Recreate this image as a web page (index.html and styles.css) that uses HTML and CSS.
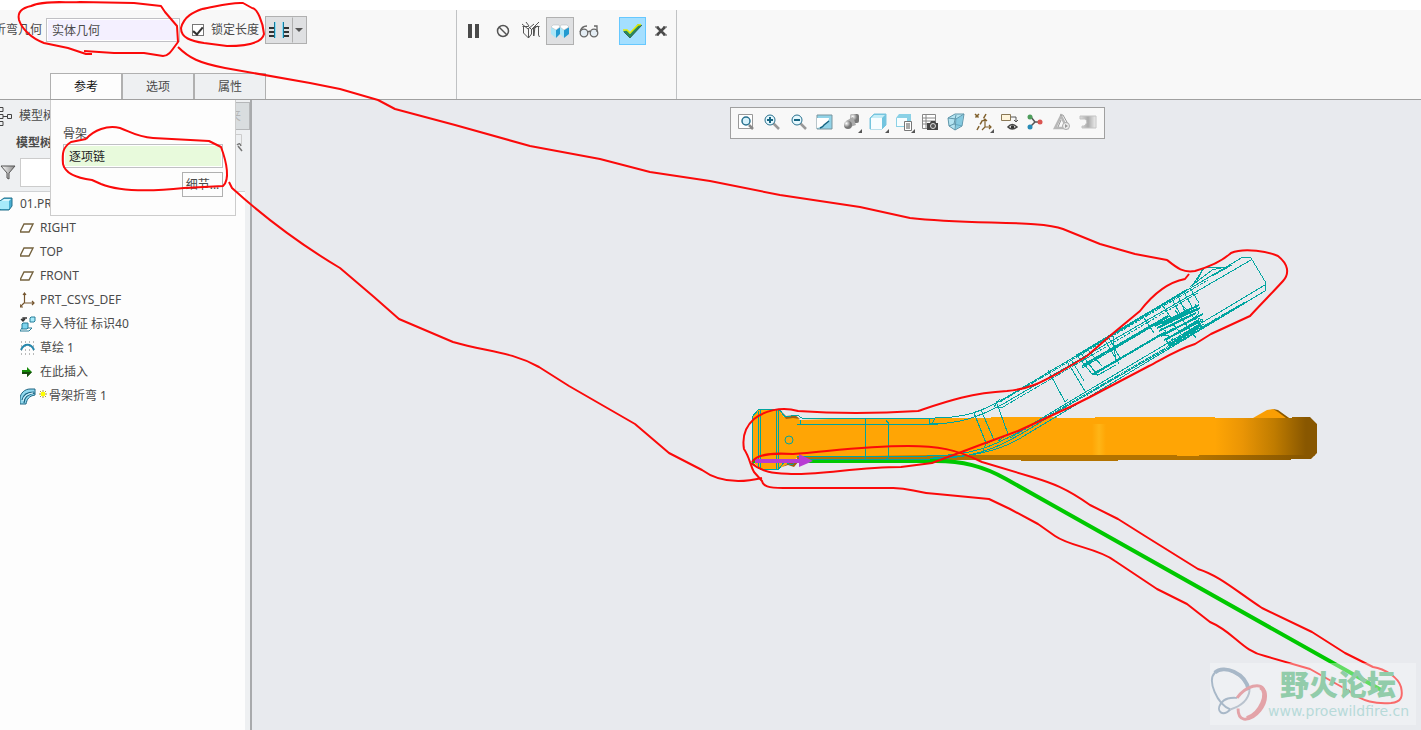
FILE: index.html
```
<!DOCTYPE html>
<html lang="zh-CN">
	<head>
		<meta charset="UTF-8" />
		<meta name="viewport" content="width=device-width, initial-scale=1.0" />
		<title>骨架折弯</title>
		<link rel="stylesheet" href="styles.css">
	</head>
	<body>
		<header class="ribbon">
			<div class="group settings">
				<div class="fields">
					<label for="geometry">折弯几何</label>
					<input id="geometry" class="collector" type="text" value="实体几何" />
					<label class="lock"><input type="checkbox" checked /><span>锁定长度</span></label>
					<div class="split">
						<button type="button" aria-label="长度方式">
							<svg width="22" height="20" viewBox="0 0 22 20">
								<path d="M1 8h5M1 12h5M1 16h5M16 8h5M16 12h5M16 16h5" stroke="#333" stroke-width="2" />
								<path d="M6.500 2v16M15.500 2v16" stroke="#167a9c" stroke-width="1" />
								<path d="M7.500 2v16M14.500 2v16" stroke="#8cdcf5" stroke-width="1" />
							</svg>
						</button>
						<button type="button" class="drop" aria-label="更多"><svg width="8" height="4"><path d="M0 0h8l-4 4z" fill="#555" /></svg></button>
					</div>
				</div>
				<nav class="tabs">
					<button type="button" class="tab active">参考</button>
					<button type="button" class="tab">选项</button>
					<button type="button" class="tab">属性</button>
				</nav>
			</div>
			<div class="group actions">
				<button type="button" aria-label="暂停"><svg width="12" height="14"><path d="M0 0h4v14h-4zM7 0h4v14h-4z" fill="#4a4a4a" /></svg></button>
				<button type="button" aria-label="无预览"><svg width="14" height="14" fill="none" stroke="#555" stroke-width="1.500"><circle cx="7" cy="7" r="5.500" /><path d="M3 3l8 8" /></svg></button>
				<button type="button" aria-label="分离"><svg width="20" height="18" fill="none" stroke="#555" stroke-width="1"><path d="M1.500 4.500h6l3 3 4-3h4M2.500 4v7l5 5 3-4V7M7.500 7v9M1 2l6 5 6-5M12.500 7l4-3M12.500 6v8M17.500 4v9l1 2M14 4l-1 10M5 0l3 4M18 0l-7 7" /></svg></button>
				<button type="button" class="on" aria-label="连接"><svg width="20" height="16"><path d="M1 4l5 3v8l-5-4zM10 4l4 3v8l-4-4z" fill="#a9e6f8" /><path d="M6 7l4-3v7l-4 4zM14 7l5-3v7l-5 4z" fill="#249bd0" /><path d="M1 4l2-2h6l1 2-4 3zM10 4l1-2h6l2 2-5 3z" fill="#fff" stroke="#adb6bb" stroke-width=".500" /></svg></button>
				<button type="button" aria-label="校验"><svg width="20" height="14" fill="#e4edf4" stroke="#666" stroke-width="1.300"><circle cx="5" cy="9" r="3.800" /><circle cx="15" cy="9" r="3.800" /><path d="M1 8c1-4 4-6 7-6M9 8c1-1 2-1 3 0M18 8V2h-3" fill="none" /></svg></button>
				<button type="button" class="accept" aria-label="确定"><svg width="20" height="16"><path d="M1 8l4-1 3 4L16 1l4 1L8 15z" fill="#2a8a5c" /><path d="M1 7h4l3 3 8-8 3-.500" fill="none" stroke="#e4ed00" stroke-width="1.500" /><path d="M2 9l6 6L20 2" fill="none" stroke="#294b3a" stroke-width=".700" /></svg></button>
				<button type="button" aria-label="取消"><svg width="12" height="10"><path d="M2 1l8 8M10 1l-8 8" stroke="#4a4a4a" stroke-width="2.500" /><path d="M0 1h4M8 1h4M0 9h4M8 9h4" stroke="#4a4a4a" /></svg></button>
			</div>
		</header>
		<main class="workspace">
			<aside class="sidebar">
				<div class="side-tabs">
					<span class="side-tab"><svg width="14" height="20" fill="none" stroke="#444"><path d="M-2 1.500h5v4h-5zM-2 8.500h5v4h-5zM-2 15.500h5v4h-5zM7.500 8.500h4v4h-4zM3 10.500h5" /></svg>模型树</span>
					<span class="side-tab folder">夹</span>
				</div>
				<div class="side-title">
					<b>模型树</b>
					<svg width="10" height="20" fill="none" stroke="#ccc"><path d="M0 1.500h5.500v10" /><path d="M1 12q3-3 4 1M2 13l4 5" stroke="#777" stroke-width="1.500" /></svg>
				</div>
				<div class="filter">
					<svg width="17" height="18"><defs><linearGradient id="funnel"><stop stop-color="#fff" /><stop offset="1" stop-color="#888" /></linearGradient></defs><path d="M1 2h14l-6 7v6l-2-1V9z" fill="url(#funnel)" stroke="#555" /></svg>
					<input type="text" aria-label="筛选" />
				</div>
				<ul class="tree">
					<li class="root"><svg width="16" height="16"><path d="M0 5l4-3h8v8l-3 4H0z" fill="#48add0" stroke="#23718c" /><path d="M0 5h9v8H0z" fill="#a7eafa" /><path d="M1 5l3-2h7l-2 2z" fill="#d6f6fd" /></svg>01.PRT</li>
					<li><svg width="16" height="16"><path d="M4 4h9l-4 8H0z" fill="#fff" stroke="#75633f" stroke-width="1.400" /></svg>RIGHT</li>
					<li><svg width="16" height="16"><path d="M4 4h9l-4 8H0z" fill="#fff" stroke="#75633f" stroke-width="1.400" /></svg>TOP</li>
					<li><svg width="16" height="16"><path d="M4 4h9l-4 8H0z" fill="#fff" stroke="#75633f" stroke-width="1.400" /></svg>FRONT</li>
					<li><svg width="16" height="16"><path d="M4.500 1v10h10M4 11l-4 4M3 3l1.500-2L6 3M12 9l2 2-2 2M0 12v3h3" fill="none" stroke="#75552e" stroke-width="1.200" /></svg>PRT_CSYS_DEF</li>
					<li><svg width="16" height="16"><path d="M10 2l1-1h4v4l-1 1h-4z" fill="#a7eafa" stroke="#267d98" /><path d="M7 2H3v3M1 3l2 2 2-2" fill="none" stroke="#333" stroke-width="1.300" /><path d="M0 15l2-3h10l-3 3z" fill="#fff" stroke="#267d98" /><path d="M2 8l1-1h5v5l-1 1H2z" fill="#7ed3ed" stroke="#267d98" /></svg>导入特征 标识40</li>
					<li><svg width="16" height="16"><path d="M1 2h14M1 6h14M1 10h14M1 14h14" stroke="#777" stroke-dasharray="1 3" /><path d="M1 10C4 3 11 3 14 10" fill="none" stroke="#2587ac" stroke-width="2" /></svg>草绘 1</li>
					<li><svg width="16" height="16"><path d="M2 6h5V3l5 5-5 5v-3H2z" fill="#158b08" /><path d="M2 8h10l-5 5v-3H2z" fill="#17490e" /></svg>在此插入</li>
					<li class="bend"><svg width="17" height="17"><path d="M0 11C0 5 5 1 10 1h5v6c-6 1-8 4-9 9H0z" fill="#91d8ee" stroke="#1d6482" /><path d="M2 12C3 7 7 4 14 4M4 15C4 9 9 6 15 5" fill="none" stroke="#1d6482" stroke-width="1.200" /><path d="M3 13C4 8 7 6 13 5" fill="none" stroke="#e7f8fd" /></svg><svg width="8" height="12"><path d="M4 0v8M0 4h8M1 1l6 6M7 1L1 7" stroke="#9b8700" stroke-width=".800" /><path d="M2 2h4v4H2z" fill="#ff0" /></svg>骨架折弯 1</li>
				</ul>
			</aside>
			<section class="canvas">
				<div class="view-tools">
					<button type="button" aria-label="重新调整"><svg viewBox="0 0 18 18"><path d="M1.500 1.500h14v14h-14z" fill="#fff" stroke="#999" /><path d="M12 12l4 4" stroke="#888" stroke-width="2.500" /><circle cx="9" cy="8" r="4" fill="#d7f2fb" stroke="#28708e" stroke-width="1.500" /></svg></button>
					<button type="button" aria-label="放大"><svg viewBox="0 0 18 18"><path d="M10 10l6 6" stroke="#999" stroke-width="2.500" /><circle cx="7" cy="7" r="5" fill="#e5f8fe" stroke="#28708e" /><path d="M4 7h6M7 4v6" stroke="#176481" stroke-width="2" /></svg></button>
					<button type="button" aria-label="缩小"><svg viewBox="0 0 18 18"><path d="M10 10l6 6" stroke="#999" stroke-width="2.500" /><circle cx="7" cy="7" r="5" fill="#e5f8fe" stroke="#28708e" /><path d="M4 7h6" stroke="#176481" stroke-width="2" /></svg></button>
					<button type="button" aria-label="重画"><svg viewBox="0 0 18 18"><path d="M1 2h15v14H1z" fill="#91d3e8" stroke="#7b959e" /><path d="M1 5h12c0 4-6 9-12 10z" fill="#fff" /><path d="M4 15q3-1 4-3l5-4" fill="none" stroke="#176481" stroke-width="1.500" /></svg></button>
					<button type="button" class="more" aria-label="渲染"><svg viewBox="0 0 18 18"><defs><radialGradient id="ball" cx=".3" cy=".3"><stop stop-color="#fff" /><stop offset="1" stop-color="#777" /></radialGradient></defs><rect x="8" y="1" width="9" height="9" rx="2" fill="url(#ball)" /><path d="M4 8l7-4 3 8-6 2z" fill="#aaa" /><circle cx="6" cy="12" r="4" fill="url(#ball)" /></svg></button>
					<button type="button" class="more" aria-label="显示样式"><svg viewBox="0 0 18 18"><path d="M1 5l4-4h12v11l-4 4H1z" fill="#71c4df" stroke="#7ac5de" /><path d="M2 5h11v11H2z" fill="#f7fdff" /><path d="M2 5l3-3h11l-3 3z" fill="#c5edf7" /></svg></button>
					<button type="button" class="more" aria-label="已保存方向"><svg viewBox="0 0 18 18"><path d="M1 5l3-4h12v8l-4 5H1z" fill="#8bd1e6" /><path d="M2 5h10v8H2z" fill="#f7fdff" /><path d="M9.500 8.500h7v9h-7z" fill="#fff" stroke="#777" /><path d="M11 11h4M11 13h4M11 15h4" stroke="#555" /></svg></button>
					<button type="button" aria-label="视图管理器"><svg viewBox="0 0 18 18"><path d="M1.500 1.500h13v14h-13zM5 2v13M2 5h12M2 8h12M2 11h12" fill="#fff" stroke="#888" /><path d="M6 10h3l1-2h4l1 2h2v7H6z" fill="#444" /><circle cx="12" cy="13" r="2.500" fill="#555" stroke="#ddd" /></svg></button>
					<button type="button" aria-label="透视图"><svg viewBox="0 0 18 18"><path d="M1 5l7-4h9l-2 12-7 4-6-4z" fill="#b4e4f1" stroke="#6096aa" /><path d="M1 5l8 1-1 11M9 6l8-5M9 2l-2 9 8 2M7 11l-5 2" fill="none" stroke="#6096aa" /><path d="M9 6l7-4-1 10-6 4z" fill="#66b7d3" opacity=".6" /></svg></button>
					<button type="button" class="more" aria-label="基准显示"><svg viewBox="0 0 18 18"><path d="M1 1l4 4M5 1L1 5M12 1L3 17" stroke="#80602c" stroke-width="1.500" stroke-dasharray="5 2" /><path d="M11 6v8h6M11 14l-3 3M9 8l2-2 2 2M15 12l2 2-2 2" fill="none" stroke="#80602c" stroke-width="1.200" /></svg></button>
					<button type="button" aria-label="注释显示"><svg viewBox="0 0 18 18"><path d="M1.500 1.500h9v6h-9z" fill="#fff5dc" stroke="#8a7856" /><path d="M11 4h5v5M14 7l2 2 2-2" fill="none" stroke="#555" /><path d="M8 14q4-5 9 0-5 4-9 0z" fill="#fff" stroke="#444" stroke-width="1.500" /><circle cx="12.500" cy="14" r="1.800" fill="#333" /></svg></button>
					<button type="button" aria-label="旋转中心"><svg viewBox="0 0 18 18"><path d="M5 4l4 5h6M9 9l-5 5" fill="none" stroke="#555" stroke-width="1.500" /><circle cx="4" cy="4" r="2.500" fill="#4e9d5c" /><circle cx="14" cy="9" r="2.500" fill="#db5551" /><circle cx="4" cy="14" r="2.500" fill="#278bb7" /></svg></button>
					<button type="button" aria-label="仿真"><svg viewBox="0 0 18 18"><path d="M8 3l6 12H2z" fill="none" stroke="#b8b8b8" stroke-width="2.500" /><path d="M7 2h3l5 9M8 7l-3 7" fill="none" stroke="#999" /><circle cx="13" cy="13" r="3.500" fill="#eee" stroke="#aaa" /><path d="M12 11l3 2-3 2z" fill="#999" /></svg></button>
					<button type="button" aria-label="结果"><svg viewBox="0 0 18 18"><defs><linearGradient id="clip"><stop stop-color="#ddd" /><stop offset=".5" stop-color="#aaa" /><stop offset="1" stop-color="#eee" /></linearGradient></defs><path d="M1 3h16v12H3v-2h2q5-4 1-7H1z" fill="url(#clip)" stroke="#c4c4c4" /></svg></button>
				</div>
				<svg class="model" width="1169" height="630" viewBox="252 100 1169 630">
					<defs>
						<linearGradient id="round" gradientUnits="userSpaceOnUse" x1="1215" x2="1306" y1="0" y2="0"><stop stop-color="#ffa505" /><stop offset=".3" stop-color="#ea9505" /><stop offset=".65" stop-color="#c07c00" /><stop offset="1" stop-color="#885700" /></linearGradient>
						<linearGradient id="edge" gradientUnits="userSpaceOnUse" x1="1200" x2="1300" y1="0" y2="0"><stop stop-color="#b37300" /><stop offset="1" stop-color="#885700" /></linearGradient>
						<linearGradient id="shine"><stop stop-color="#ffa505" /><stop offset=".5" stop-color="#ffb516" /><stop offset="1" stop-color="#ffa505" /></linearGradient>
					</defs>
					<!-- straight solid -->
					<path d="M752 417l7-8h20l5 8h12l4 3 60-2h131v-1h66v1h38v-1h120v39H940l-143 2-15 9-4 2h-18l-8-8z" fill="#ffa505" />
					<path d="M779 409l7 7 9-1 5 4-7-1-7 1zM782 467l6-2 6 2 5-6h-6l-6 3z" fill="#a06212" />
					<path d="M797 457l138-2h265v5h-82v1h-97v-1H797z" fill="#b37300" />
					<path d="M1092 424h14v31h-14z" fill="url(#shine)" />
					<path d="M1177 418h115v-1h18l7 7v29l-3 3h-137z" fill="url(#round)" />
					<path d="M1199 455h116l-4 4h-20v1h-92z" fill="url(#edge)" />
					<path d="M1253 418l14-8 6-1 5 2 11 7z" fill="#f99e04" />
					<path d="M1273 409l5 1 11 8h-3l-8-6z" fill="#8a5900" />
					<!-- trajectory -->
					<path d="M753 461h183c26 0 47 5 70 18l377 212" fill="none" stroke="#00c800" stroke-width="4" />
					<!-- bent wireframe -->
					<g class="wire">
						<path d="M752 463v-46l7-8h20l6 8 12-2 5 3h133c28 0 47-6 70-20L1243 257l8 1 15 25-1 8-85 50-125 72c-39 24-66 46-125 46H799l-7 6-8-3-5 7h-19zM758 411v57M760 410v59M776 410v59M778 410v59" />
						<path d="M797 424h133c29 0 49-7 73-20L1251 260M800 420v4h138M797 456h130c44 0 68-10 95-26L1265 285M933 458c39-1 68-7 91-22L1265 291" />
						<path d="M865 418v42M888 424v34l-3 2M886 420l3 4M929 418v6M935 418l-3 6M974 413l12 30-3 8M981 410l13 30-8 4M996 401l12 33-10 7M1000 399l-6 8M995 407h8M1048 370l17 32 3-3M1068 363l20 33M1072 361l12 20" />
						<path d="M1000 402L1208 280M1003 407L1198 293M1010 438L1245 302" stroke-dasharray="3 1" />
						<path d="M1076 354l16 20 6 1 18-10M1080 352l18 24M1087 349l15 17M1082 368L1170 316M1092 374L1174 328M1105 340l14 24M1109 338l12 22M1113 336l3 27" />
						<path d="M1144 318l10 15M1163 306l10 15M1172 299l9 17M1178 296l8 18M1184 292l9 17M1190 288l9 15" />
						<path d="M1082 366l86-50M1094 374l68-40M1076 356L1187 290M1155 326l44-21M1157 328l43-20M1163 323l34-14M1159 331l37-18M1161 336l42-22M1164 340l37-19M1168 345l30-17M1167 339l32-19M1170 344l30-19" stroke-width="2" />
						<path d="M1195 304l4 9-4 4 8 3-5 7 9-1-35 19-6-4 3-5-8-1 5-4-7-4M1175 310l21 28M1183 306l21 23M1168 318l18 22M1173 338l-5 7 36-21" />
						<path d="M1192 286l12-18 21-1-13 3-22 17M1203 268l-6 13M1212 276l20-11" />
						<circle class="hole" cx="789" cy="440" r="4" />
					</g>
					<path d="M755 461h46" stroke="#b83bd3" stroke-width="4" /><path d="M799 454l14 7-14 6z" fill="#b83bd3" />
				</svg>
			</section>
			<div class="panel">
				<label for="spine">骨架</label>
				<input id="spine" class="collector" type="text" value="逐项链" />
				<button type="button">细节...</button>
			</div>
		</main>
		<!-- hand drawn notes -->
		<svg class="notes" width="1421" height="730" viewBox="0 0 1421 730">
			<path d="M92 54L86 54 68 48 44 43C31 38 22 29 19 20 17 12 22 8 31 6 44 0 66 3 80 2L134 3 161 6 165 12 177 26 178 42C172 50 169 56 163 56L144 53H114L84 51" />
			<path d="M202 9C194 12 184 16 181 28 181 38 191 41 204 43L227 46C243 46 262 44 264 34 263 22 257 8 252 8L243 3C229 2 215 7 202 9" />
			<path d="M178 47C189 58 199 63 225 68L310 83 340 89 378 100 395 109 455 125 530 146 600 159 650 172 710 181 780 195 860 207 910 218C970 225 1040 220 1063 229L1100 244 1135 254 1167 260C1177 268 1183 273 1195 271 1209 267 1221 262 1231 253 1245 247 1269 252 1278 256 1288 264 1290 273 1283 281 1274 291 1260 305 1250 316L1211 334 1195 344C1176 350 1161 360 1149 366L1090 397 1070 407 1018 431 980 445 932 463 901 467C858 467 822 475 794 474 778 473 764 474 751 463" />
			<path d="M1189 274L1185 279C1164 283 1150 298 1140 311L1111 335 1087 356 1060 372C1042 382 1030 389 1007 391 970 393 945 402 918 411 872 414 825 413 798 411 781 406 764 411 754 419 745 427 742 437 744 449 750 458 750 465 754 472L762 481C763 486 768 488 783 488H890C911 487 913 493 937 494L989 499 1010 509 1038 524 1055 536C1071 547 1098 548 1115 561L1157 589 1187 604 1210 622C1234 632 1242 651 1265 656L1310 669 1349 691C1363 702 1376 704 1391 703 1402 702 1403 696 1401 687 1398 677 1385 669 1373 667L1345 653 1312 632 1262 608C1236 591 1220 576 1198 569L1145 536 1118 519 1090 505C1066 488 1052 483 1032 477L982 462C956 449 937 446 908 446 861 446 825 452 793 454 776 453 757 453 752 462" />
			<path d="M86 139L71 142C63 147 62 153 63 164 65 173 76 178 92 180L101 184C123 193 156 191 184 188L223 186C230 180 227 163 221 147L209 141 153 138C137 137 131 132 120 128 107 125 94 130 86 139" />
			<path d="M229 182L232 188C264 217 303 246 340 268L374 297 399 319 453 342C487 352 510 351 539 367L569 386 635 424 669 453 702 470C717 481 737 484 762 478" />
		</svg>
		<div class="watermark">
			<svg width="58" height="58" viewBox="0 0 60 58" fill="none">
				<path d="M21 45C7 39-3 15 5 7c9-9 29 1 35 16M21 45c-8 8-15 2-10-6 5-7 12-6 17-6" stroke="#a8b8c8" stroke-width="2" />
				<path d="M5 7c9-9 32 0 35 18" stroke="#a8b8c8" stroke-width="4" />
				<path d="M28 33c9-12 25-18 29-6 3 13-10 29-22 28-5-1-6-7-6-11" stroke="#e3a3a8" stroke-width="3" />
				<path d="M52 22c10 5 0 28-14 32" stroke="#e3a3a8" stroke-width="4" />
				<path d="M41 25c-1 8-7 16-20 20" stroke="#b9c3ce" stroke-width="2" />
			</svg>
			<div><strong>野火论坛</strong><span>www.proewildfire.cn</span></div>
		</div>
	</body>
</html>
```
FILE: styles.css
```
* {
	box-sizing: border-box;
}
body,
html {
	margin: 0;
	height: 100%;
}
body {
	position: relative;
	display: flex;
	flex-direction: column;
	overflow: hidden;
	padding-top: 10px;
	background: #fff;
	color: #4a4a4a;
	font: 12px/16px "Noto Sans", "Noto Sans CJK SC", sans-serif;
}
button,
input {
	margin: 0;
	color: inherit;
	font: inherit;
}
button {
	display: flex;
	align-items: center;
	justify-content: center;
	padding: 0;
	border: 1px solid transparent;
	background: transparent;
}
svg {
	flex: none;
	display: block;
}
.ribbon {
	display: flex;
	height: 90px;
	flex: none;
	background: #f8f8f8;
	border-bottom: 1px solid #a0a0a0;
}
.group {
	border-right: 1px solid #c0c2c4;
}
.settings {
	width: 457px;
	display: flex;
	flex-direction: column;
	justify-content: space-between;
}
.fields {
	display: flex;
	align-items: center;
	margin-left: -6px;
	padding-top: 6px;
}
.collector {
	height: 24px;
	padding: 0 5px;
	border: 1px solid #c0c0c4;
	background: #f4f0ff;
}
.fields .collector {
	width: 134px;
	margin-left: 4px;
	box-shadow: inset 0 0 0 1px #fff;
}
.lock {
	display: flex;
	align-items: center;
	gap: 7px;
	margin: 0 6px 0 12px;
}
.lock input {
	appearance: none;
	display: grid;
	place-items: center;
	width: 12px;
	height: 12px;
	border: 1px solid #777;
	background: #fff;
}
.lock input:checked::after {
	content: "";
	width: 4px;
	height: 8px;
	border: solid #333;
	border-width: 0 2px 2px 0;
	transform: rotate(40deg);
}
.split {
	display: flex;
	height: 28px;
	border: 1px solid #b0b0b0;
	background: #dfe0e2;
}
.split button {
	width: 26px;
}
.split .drop {
	width: 14px;
	border-left-color: #b0b0b0;
}
.tabs {
	display: flex;
	padding-left: 50px;
}
.tab {
	width: 72px;
	height: 26px;
	border: 1px solid #b0b0b0;
	border-bottom: 0;
	background: #eef0f2;
}
.tab.active {
	background: #fdfdfd;
	color: #111;
}
.actions {
	display: flex;
	align-items: flex-start;
	width: 220px;
	padding: 7px 0 0 3px;
}
.actions button {
	width: 28px;
	height: 28px;
	margin-right: 1px;
}
.actions .on {
	border-color: #b0b0b0;
	background: #dfe0e2;
}
.actions .accept {
	margin-left: 15px;
	border-color: #66c8ff;
	background: #a4dfff;
}
.workspace {
	position: relative;
	display: flex;
	flex: 1;
	min-height: 0;
}
.sidebar {
	width: 252px;
	flex: none;
	display: flex;
	flex-direction: column;
	background: #eef0f2;
	border-right: 2px solid #a8aaac;
}
.side-tabs {
	display: flex;
	justify-content: space-between;
	align-items: center;
	height: 31px;
}
.side-tab {
	display: flex;
	align-items: center;
	gap: 5px;
}
.folder {
	height: 28px;
	padding: 0 8px 0 4px;
	border: 1px solid #b5b7b9;
	background: #d9dddf;
	color: #b5b5b5;
}
.side-title {
	display: flex;
	align-items: center;
	justify-content: space-between;
	height: 24px;
	padding: 0 4px 0 16px;
}
.filter {
	display: flex;
	align-items: center;
	gap: 3px;
	padding: 3px 15px 4px 0;
}
.filter input {
	flex: 1;
	min-width: 0;
	height: 29px;
	border: 1px solid #ccc;
	background: #fff;
}
.tree {
	flex: 1;
	margin: 0 5px 0 0;
	padding: 0;
	border-top: 1px solid #d0d2d4;
	background: #fdfdfd;
	list-style: none;
}
.tree li {
	display: flex;
	align-items: center;
	gap: 4px;
	height: 24px;
	padding-left: 20px;
}
.tree .root {
	padding-left: 0;
}
.tree .bend {
	gap: 2px;
}
.canvas {
	flex: 1;
	min-width: 0;
	overflow: hidden;
	position: relative;
	background: #e8eaee;
}
.view-tools {
	position: relative;
	z-index: 1;
	display: flex;
	align-items: center;
	justify-content: space-around;
	width: 375px;
	height: 32px;
	margin: 7px 0 0 478px;
	padding: 0 3px 2px 2px;
	border: 1px solid #a0a0a0;
	background: #f8f8f8;
}
.view-tools button {
	position: relative;
	width: 24px;
	height: 24px;
}
.view-tools svg {
	width: 18px;
	height: 18px;
}
.view-tools .more::after {
	content: "";
	position: absolute;
	right: 0;
	bottom: 0;
	border: 2px solid #555;
	border-top-color: transparent;
	border-left-color: transparent;
}
.model {
	position: absolute;
	top: 0;
	left: 0;
}
.wire {
	fill: none;
	stroke: #00a5a0;
	stroke-width: 1;
	shape-rendering: crispEdges;
}
.hole {
	shape-rendering: auto;
}
.panel {
	position: absolute;
	top: 0;
	left: 50px;
	display: flex;
	flex-direction: column;
	align-items: flex-start;
	width: 186px;
	padding: 26px 12px 18px;
	border: 1px solid #ccc;
	border-top: 0;
	background: #fdfdfd;
}
.panel .collector {
	width: 160px;
	margin: 2px 0 4px;
	background: #e8fadc;
	box-shadow: inset 0 0 0 1px #fff;
	color: #222;
}
.panel button {
	align-self: flex-end;
	width: 41px;
	height: 25px;
	border-color: #b0b0b0;
}
.notes {
	position: absolute;
	top: 0;
	left: 0;
	fill: none;
	stroke: #fb0a0a;
	stroke-width: 2;
	stroke-linejoin: round;
	pointer-events: none;
}
.watermark {
	position: absolute;
	right: 5px;
	bottom: 5px;
	display: flex;
	align-items: center;
	width: 206px;
	height: 62px;
	background: rgba(247, 249, 249, 0.4);
}
.watermark strong {
	display: block;
	color: #92ccaa;
	font: 900 29px/34px "Noto Sans CJK SC", sans-serif;
	padding-left: 12px;
}
.watermark span {
	display: block;
	color: #b7dad9;
	font: 14px/22px "DejaVu Sans", sans-serif;
}
```
